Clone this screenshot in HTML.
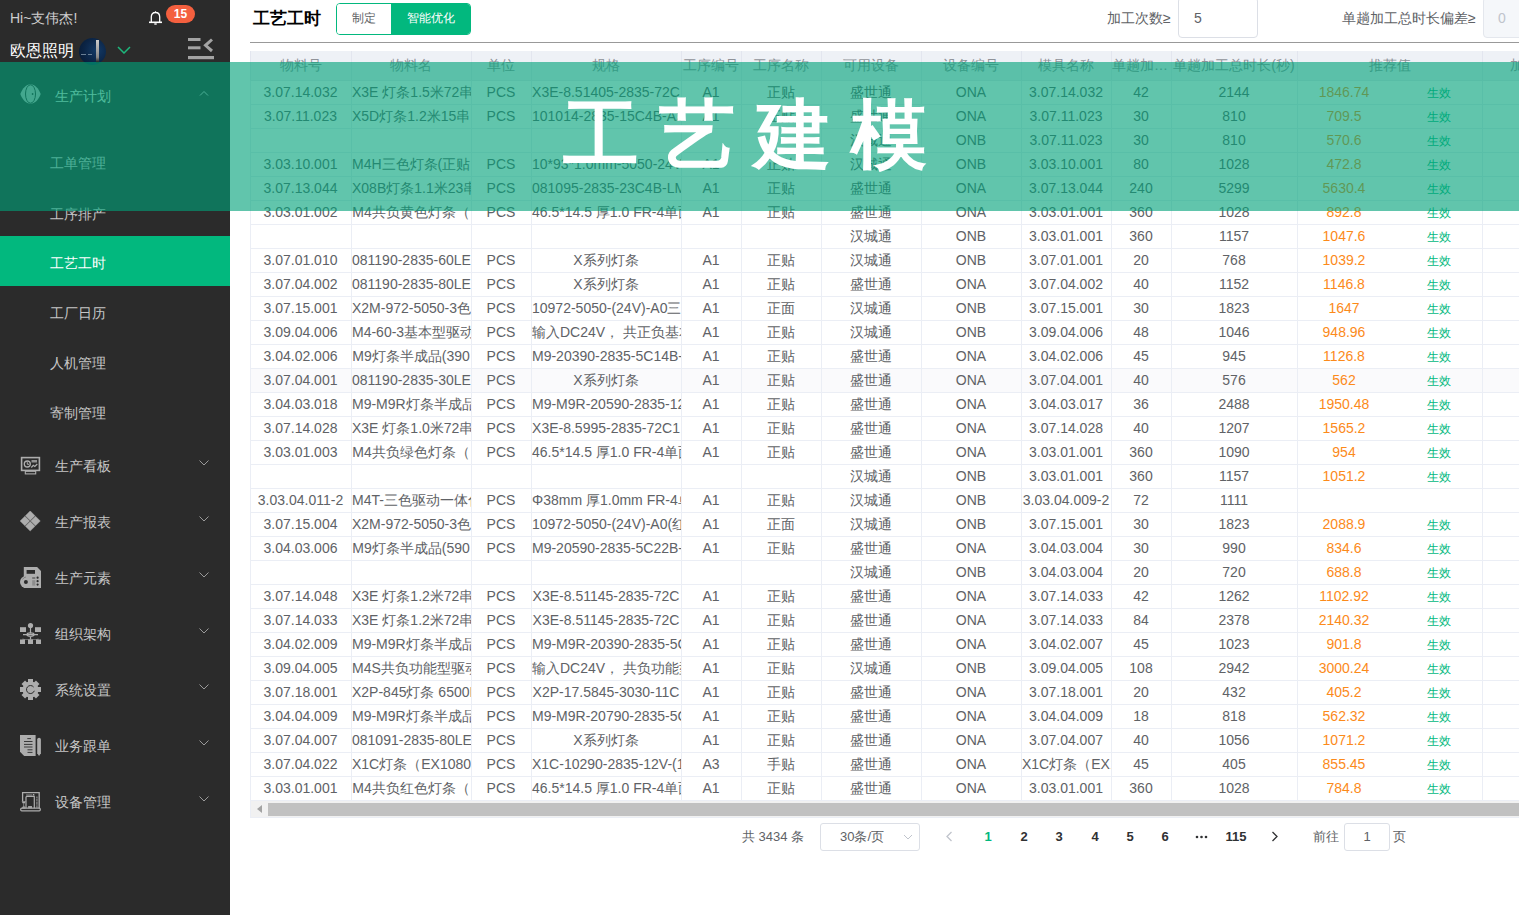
<!DOCTYPE html>
<html><head><meta charset="utf-8"><style>
*{box-sizing:content-box}
html,body{margin:0;padding:0;width:1519px;height:915px;overflow:hidden;background:#fff;font-family:"Liberation Sans",sans-serif;}
.abs{position:absolute}
.side{position:absolute;left:0;top:0;width:230px;height:915px;background:#2b2b2b;color:#c8c8c8;font-size:14px}
.hi{position:absolute;left:10px;top:8px;line-height:20px;font-size:14px;color:#cfcfcf;white-space:nowrap}
.badge{position:absolute;left:166px;top:5px;width:29px;height:18px;border-radius:9px;background:#f4603f;color:#fff;font-size:12px;line-height:18px;text-align:center;font-weight:bold}
.org{position:absolute;left:10px;top:40px;line-height:22px;font-size:16px;color:#fff;white-space:nowrap}
.avatar{position:absolute;left:79px;top:38px;width:27px;height:27px;border-radius:50%;background:radial-gradient(circle at 65% 45%,#143a66 0%,#0b2445 55%,#07182e 100%);overflow:hidden}
.menu{position:absolute;left:0;width:230px;height:56px;line-height:56px;color:#c6c6c6;font-size:14px}
.menu .t{position:absolute;left:55px;top:0}
.menu svg.ic{position:absolute;left:20px;top:18px}
.menu .chev{position:absolute;left:199px;top:22px}
.sub{position:absolute;left:0;width:230px;height:50px;line-height:50px;color:#c6c6c6;font-size:14px}
.sub .t{position:absolute;left:50px;top:2px}
.sub.act{background:#02b87e;color:#fff}
.title{position:absolute;left:253px;top:6px;font-size:17px;font-weight:bold;color:#000;line-height:26px}
.btng{position:absolute;left:336px;top:3px;width:133px;height:30px;border:1px solid #02b87e;border-radius:4px;overflow:hidden;font-size:12px}
.btng .b1{position:absolute;left:0;top:0;width:54px;height:30px;line-height:29px;text-align:center;color:#606266;background:#fff}
.btng .b2{position:absolute;left:54px;top:0;width:79px;height:30px;line-height:29px;text-align:center;color:#fff;background:#02b87e;font-weight:500}
.lbl{position:absolute;top:8px;font-size:14px;line-height:20px;color:#606266;white-space:nowrap}
.inp{position:absolute;top:-3px;height:39px;border:1px solid #dcdfe6;border-radius:4px;background:#fff;font-size:14px;line-height:39px;color:#606266}
.hline{position:absolute;left:250px;top:42px;width:1269px;height:1px;background:#999}
.table{position:absolute;left:250px;top:51px;width:1269px;height:767px;overflow:hidden}
.thead{position:absolute;left:0;top:0;width:1269px;height:29px;background:#eef1f6;border-bottom:1px solid #e6e9f0}
.th{position:absolute;top:0;height:29px;line-height:29px;border-left:1px solid #e3e6ef;padding-right:1px;text-align:center;color:#909399;font-size:14px;white-space:nowrap;overflow:hidden;text-overflow:ellipsis}
.tr{position:absolute;left:0;width:1269px;height:23px;border-bottom:1px solid #ebeef5;background:#fff}
.tr.hov{background:#fafafc}
.td{position:absolute;top:0;height:23px;line-height:23px;border-left:1px solid #ebeef5;padding-right:1px;text-align:center;color:#606266;font-size:14px;white-space:nowrap;overflow:hidden}
.rec .val{position:absolute;left:0;width:92px;text-align:center;color:#fc8a1a}
.rec .eff{position:absolute;left:117px;top:1px;width:48px;text-align:center;color:#02b87e;font-size:12px}
.scroll{position:absolute;left:0;top:750px;width:1269px;height:16px;background:#f1f1f1;border-left:1px solid #ebeef5;border-bottom:1px solid #ebeef5}
.thumb{position:absolute;left:17px;top:2px;width:1300px;height:13px;background:#c1c1c1}
.pg{position:absolute;top:827px;font-size:13px;line-height:20px;color:#606266;white-space:nowrap}
.pn{position:absolute;top:827px;font-size:13px;line-height:20px;color:#303133;font-weight:bold;text-align:center;width:30px}
.overlay{position:absolute;left:0;top:62px;width:1519px;height:149px;background:rgba(0,161,121,0.62);z-index:50}
.bigt{position:absolute;left:563px;top:90px;font-size:76px;line-height:90px;color:#fff;letter-spacing:20px;font-weight:bold;white-space:nowrap;z-index:51}
</style></head><body>
<div class="side">
  <div class="hi">Hi~支伟杰!</div>
  <svg class="abs" style="left:148px;top:10px" width="15" height="16" viewBox="0 0 15 16"><path d="M7.5 1.2 L7.5 2.2 M3.3 12 L3.3 7 Q3.3 2.5 7.5 2.5 Q11.7 2.5 11.7 7 L11.7 12" fill="none" stroke="#fff" stroke-width="1.3"/><path d="M1 12.3 H14" stroke="#fff" stroke-width="1.6"/><path d="M6.3 14 H8.7" stroke="#fff" stroke-width="1.4"/></svg>
  <div class="badge">15</div>
  <div class="org">欧恩照明</div>
  <div class="avatar"><div class="abs" style="left:17px;top:2px;width:3px;height:23px;background:linear-gradient(#ccc,#888 75%,#111)"></div><div class="abs" style="left:2px;top:16px;width:5px;height:1px;background:#6a7f95"></div><div class="abs" style="left:9px;top:16px;width:4px;height:1px;background:#6a7f95"></div></div>
  <svg class="abs" style="left:117px;top:46px" width="14" height="8" viewBox="0 0 14 8"><path d="M1 1 L7 7 L13 1" fill="none" stroke="#1db77c" stroke-width="1.5"/></svg>
  <svg class="abs" style="left:187px;top:37px" width="28" height="23" viewBox="0 0 28 23"><rect x="1" y="1" width="12.5" height="3" fill="#a3a3a3"/><rect x="1" y="9.3" width="12.5" height="3" fill="#a3a3a3"/><rect x="1" y="19" width="26" height="3.2" fill="#a3a3a3"/><path d="M25 2.5 L18.5 8.3 L25 14" fill="none" stroke="#a3a3a3" stroke-width="3"/></svg>

  <div class="menu" style="top:68px;color:#cde6d6"><svg class="ic" width="21" height="20" viewBox="0 0 21 20" style="top:16px;left:20px"><path d="M0.3 10 C2.5 4 6.5 0.2 10.5 0.2 C14.5 0.2 18.5 4 20.7 10 C18.5 16 14.5 19.8 10.5 19.8 C6.5 19.8 2.5 16 0.3 10Z" fill="#b0b0b0"/><ellipse cx="10.5" cy="10" rx="5" ry="9.2" fill="none" stroke="#2b2b2b" stroke-width="1"/><circle cx="12.6" cy="10" r="0.9" fill="#2b2b2b"/></svg><span class="t">生产计划</span><svg class="chev" style="top:22px" width="10" height="6" viewBox="0 0 10 6"><path d="M1 5.5 L5 1.5 L9 5.5" fill="none" stroke="#c6c6c6" stroke-width="1"/></svg></div>
  <div class="sub" style="top:136px"><span class="t">工单管理</span></div>
  <div class="sub" style="top:187px"><span class="t">工序排产</span></div>
  <div class="sub act" style="top:236px"><span class="t">工艺工时</span></div>
  <div class="sub" style="top:286px"><span class="t">工厂日历</span></div>
  <div class="sub" style="top:336px"><span class="t">人机管理</span></div>
  <div class="sub" style="top:386px"><span class="t">寄制管理</span></div>

  <div class="menu" style="top:438px"><svg class="ic" style="left:20px;top:17px" width="21" height="21" viewBox="0 0 21 21"><rect x="1.6" y="2.6" width="17.8" height="12.8" fill="none" stroke="#adadad" stroke-width="1.6"/><circle cx="7.3" cy="9" r="3" fill="none" stroke="#adadad" stroke-width="1.3"/><path d="M7.3 7.2V9.3H9" fill="none" stroke="#adadad" stroke-width="1"/><path d="M11.3 12.5 L13.3 10.3 L14.8 11.5 L17.3 9" fill="none" stroke="#adadad" stroke-width="1.2"/><rect x="11.5" y="5" width="5.5" height="2.5" fill="#adadad" opacity="0.8"/><rect x="5.3" y="16.3" width="10.4" height="2.6" fill="none" stroke="#adadad" stroke-width="1.1"/></svg><span class="t">生产看板</span><svg class="chev" width="10" height="6" viewBox="0 0 10 6"><path d="M0.5 0.5 L5 5 L9.5 0.5" fill="none" stroke="#9a9a9a" stroke-width="1"/></svg></div>
<div class="menu" style="top:494px"><svg class="ic" style="left:20px;top:17px" width="21" height="21" viewBox="0 0 21 21"><path d="M10.2 -0.1 L15 4.7 L10.2 9.5 L5.4 4.7Z M15.5 5.2 L20.3 10 L15.5 14.8 L10.7 10Z M10.2 10.5 L15 15.3 L10.2 20.1 L5.4 15.3Z M4.9 5.2 L9.7 10 L4.9 14.8 L0.1 10Z" fill="#adadad" stroke="#adadad" stroke-width="0.4" stroke-linejoin="round"/></svg><span class="t">生产报表</span><svg class="chev" width="10" height="6" viewBox="0 0 10 6"><path d="M0.5 0.5 L5 5 L9.5 0.5" fill="none" stroke="#9a9a9a" stroke-width="1"/></svg></div>
<div class="menu" style="top:550px"><svg class="ic" style="left:20px;top:17px" width="21" height="21" viewBox="0 0 21 21"><path d="M3.8 0 H17.1 L21 3.9 V21 H3.8Z" fill="#adadad"/><circle cx="5.9" cy="15" r="5.9" fill="#adadad"/><rect x="6.6" y="3" width="8.4" height="3.8" fill="#2b2b2b"/><circle cx="5.9" cy="15.1" r="2" fill="#2b2b2b"/><circle cx="17.6" cy="10.7" r="1.1" fill="#2b2b2b"/><circle cx="17.6" cy="14.2" r="1.1" fill="#2b2b2b"/><circle cx="17.6" cy="17.6" r="1.1" fill="#2b2b2b"/><rect x="12.2" y="10.4" width="3.1" height="1.2" fill="#555"/><rect x="12.2" y="13.2" width="3.1" height="5.4" fill="#8c8c8c"/><path d="M2.5 12.5 A4.5 4.5 0 0 1 6 10" fill="none" stroke="#777" stroke-width="0.8"/></svg><span class="t">生产元素</span><svg class="chev" width="10" height="6" viewBox="0 0 10 6"><path d="M0.5 0.5 L5 5 L9.5 0.5" fill="none" stroke="#9a9a9a" stroke-width="1"/></svg></div>
<div class="menu" style="top:606px"><svg class="ic" style="left:20px;top:17px" width="21" height="21" viewBox="0 0 21 21"><circle cx="10.5" cy="2.6" r="2.6" fill="#adadad"/><rect x="0" y="4.2" width="6" height="4.8" fill="#adadad"/><rect x="15" y="4.2" width="6" height="4.8" fill="#adadad"/><path d="M10.5 4 V10.5 M3 11.6 H18" stroke="#adadad" stroke-width="1.2"/><ellipse cx="10.5" cy="11.6" rx="3.6" ry="1.8" fill="none" stroke="#adadad" stroke-width="1.3"/><path d="M10.5 13.4 V16.5 M3 15.5 V16.5 H18 V15.5" stroke="#6a6a6a" stroke-width="1.2" fill="none"/><path d="M10.5 13.4 V16.5" stroke="#adadad" stroke-width="1.2"/><rect x="0" y="16.5" width="5" height="4.5" fill="#adadad"/><rect x="8" y="16.5" width="5" height="4.5" fill="#adadad"/><rect x="16" y="16.5" width="5" height="4.5" fill="#adadad"/></svg><span class="t">组织架构</span><svg class="chev" width="10" height="6" viewBox="0 0 10 6"><path d="M0.5 0.5 L5 5 L9.5 0.5" fill="none" stroke="#9a9a9a" stroke-width="1"/></svg></div>
<div class="menu" style="top:662px"><svg class="ic" style="left:20px;top:17px" width="21" height="21" viewBox="0 0 21 21"><g fill="#adadad"><circle cx="10.5" cy="10.5" r="8"/><rect x="8" y="0" width="5" height="21"/><rect x="0" y="8" width="21" height="5"/><rect x="8" y="0.3" width="5" height="20.4" transform="rotate(45 10.5 10.5)"/><rect x="8" y="0.3" width="5" height="20.4" transform="rotate(-45 10.5 10.5)"/></g><path d="M14.3 11.8 A4 4 0 1 1 13.6 8" fill="none" stroke="#2b2b2b" stroke-width="1"/></svg><span class="t">系统设置</span><svg class="chev" width="10" height="6" viewBox="0 0 10 6"><path d="M0.5 0.5 L5 5 L9.5 0.5" fill="none" stroke="#9a9a9a" stroke-width="1"/></svg></div>
<div class="menu" style="top:718px"><svg class="ic" style="left:20px;top:17px" width="21" height="21" viewBox="0 0 21 21"><path d="M0 0 H15.6 V21 H4.2 L0 16.7Z" fill="#adadad"/><path d="M7.3 3.6H11 M4 6.5H12.5 M4 9.4H12.5 M7.5 14.8H12.5 M7.5 17.4H12.5" stroke="#2b2b2b" stroke-width="0.9"/><path d="M4 12H12.5" stroke="#555" stroke-width="1.3"/><path d="M17.2 4.6 Q17.2 2.8 19.05 2.8 Q20.9 2.8 20.9 4.6 V18.3 L19.05 21 L17.2 18.3Z" fill="#adadad"/></svg><span class="t">业务跟单</span><svg class="chev" width="10" height="6" viewBox="0 0 10 6"><path d="M0.5 0.5 L5 5 L9.5 0.5" fill="none" stroke="#9a9a9a" stroke-width="1"/></svg></div>
<div class="menu" style="top:774px"><svg class="ic" style="left:20px;top:17px" width="21" height="21" viewBox="0 0 21 21"><path d="M2.6 10.2 V1.7 H19.2 V17.3" fill="none" stroke="#adadad" stroke-width="1.3"/><rect x="0.7" y="17.2" width="19.6" height="2.6" rx="1" fill="none" stroke="#adadad" stroke-width="1.2"/><path d="M6 4 H12.4" stroke="#adadad" stroke-width="1" opacity="0.8"/><rect x="13" y="3" width="1.3" height="1.5" fill="#adadad"/><path d="M6 17.3 V6.3 Q6 5.3 7 5.3 H14.3 V17.3" fill="none" stroke="#adadad" stroke-width="1.2"/><path d="M1.6 10.3 H5.8 L4.6 12.6 H2.8Z" fill="#adadad"/><path d="M3.7 12.6 V14.5 M2.3 17.2 L3.7 14.6 L5.2 17.2Z" stroke="#adadad" stroke-width="0.8" fill="#adadad" opacity="0.85"/><rect x="8.1" y="15" width="3.9" height="2.3" fill="#adadad" opacity="0.9"/><path d="M16.9 5.5 V16.8" stroke="#adadad" stroke-width="1.7" opacity="0.55"/><path d="M16.2 7.5 H17.6 M16.2 10.4 H17.6 M16.2 14 H17.6" stroke="#2b2b2b" stroke-width="0.7"/></svg><span class="t">设备管理</span><svg class="chev" width="10" height="6" viewBox="0 0 10 6"><path d="M0.5 0.5 L5 5 L9.5 0.5" fill="none" stroke="#9a9a9a" stroke-width="1"/></svg></div>
</div>

<div class="title">工艺工时</div>
<div class="btng"><div class="b1">制定</div><div class="b2">智能优化</div></div>
<div class="lbl" style="left:1107px">加工次数≥</div>
<div class="inp" style="left:1178px;width:78px"><span style="position:absolute;left:15px;top:1px">5</span></div>
<div class="lbl" style="left:1342px">单趟加工总时长偏差≥</div>
<div class="inp" style="left:1483px;width:60px;background:#f5f7fa;border-color:#e4e7ed;color:#c0c4cc"><span style="position:absolute;left:14px;top:1px">0</span></div>
<div class="hline"></div>

<div class="table">
<div class="thead"><div class="th" style="left:0px;width:99px">物料号</div><div class="th" style="left:101px;width:118px">物料名</div><div class="th" style="left:221px;width:58px">单位</div><div class="th" style="left:281px;width:148px">规格</div><div class="th" style="left:431px;width:58px">工序编号</div><div class="th" style="left:491px;width:78px">工序名称</div><div class="th" style="left:571px;width:98px">可用设备</div><div class="th" style="left:671px;width:98px">设备编号</div><div class="th" style="left:771px;width:88px">模具名称</div><div class="th" style="left:861px;width:58px">单趟加工次数</div><div class="th" style="left:921px;width:124px">单趟加工总时长(秒)</div><div class="th" style="left:1047px;width:183px">推荐值</div><div class="th" style="left:1232px;width:110px">加工次数</div></div><div class="tr" style="top:30px"><div class="td" style="left:0px;width:99px">3.07.14.032</div><div class="td" style="left:101px;width:118px">X3E 灯条1.5米72串</div><div class="td" style="left:221px;width:58px">PCS</div><div class="td" style="left:281px;width:148px">X3E-8.51405-2835-72C</div><div class="td" style="left:431px;width:58px">A1</div><div class="td" style="left:491px;width:78px">正贴</div><div class="td" style="left:571px;width:98px">盛世通</div><div class="td" style="left:671px;width:98px">ONA</div><div class="td" style="left:771px;width:88px">3.07.14.032</div><div class="td" style="left:861px;width:58px">42</div><div class="td" style="left:921px;width:124px">2144</div><div class="td rec" style="left:1047px;width:184px"><span class="val">1846.74</span><span class="eff">生效</span></div><div class="td" style="left:1232px;width:111px"></div></div><div class="tr" style="top:54px"><div class="td" style="left:0px;width:99px">3.07.11.023</div><div class="td" style="left:101px;width:118px">X5D灯条1.2米15串</div><div class="td" style="left:221px;width:58px">PCS</div><div class="td" style="left:281px;width:148px">101014-2835-15C4B-A2</div><div class="td" style="left:431px;width:58px">A1</div><div class="td" style="left:491px;width:78px">正贴</div><div class="td" style="left:571px;width:98px">盛世通</div><div class="td" style="left:671px;width:98px">ONA</div><div class="td" style="left:771px;width:88px">3.07.11.023</div><div class="td" style="left:861px;width:58px">30</div><div class="td" style="left:921px;width:124px">810</div><div class="td rec" style="left:1047px;width:184px"><span class="val">709.5</span><span class="eff">生效</span></div><div class="td" style="left:1232px;width:111px"></div></div><div class="tr" style="top:78px"><div class="td" style="left:0px;width:99px"></div><div class="td" style="left:101px;width:118px"></div><div class="td" style="left:221px;width:58px"></div><div class="td" style="left:281px;width:148px"></div><div class="td" style="left:431px;width:58px"></div><div class="td" style="left:491px;width:78px"></div><div class="td" style="left:571px;width:98px">汉城通</div><div class="td" style="left:671px;width:98px">ONB</div><div class="td" style="left:771px;width:88px">3.07.11.023</div><div class="td" style="left:861px;width:58px">30</div><div class="td" style="left:921px;width:124px">810</div><div class="td rec" style="left:1047px;width:184px"><span class="val">570.6</span><span class="eff">生效</span></div><div class="td" style="left:1232px;width:111px"></div></div><div class="tr" style="top:102px"><div class="td" style="left:0px;width:99px">3.03.10.001</div><div class="td" style="left:101px;width:118px">M4H三色灯条(正贴</div><div class="td" style="left:221px;width:58px">PCS</div><div class="td" style="left:281px;width:148px">10*93*1.0mm-5050-24V</div><div class="td" style="left:431px;width:58px">A1</div><div class="td" style="left:491px;width:78px">正贴</div><div class="td" style="left:571px;width:98px">汉城通</div><div class="td" style="left:671px;width:98px">ONB</div><div class="td" style="left:771px;width:88px">3.03.10.001</div><div class="td" style="left:861px;width:58px">80</div><div class="td" style="left:921px;width:124px">1028</div><div class="td rec" style="left:1047px;width:184px"><span class="val">472.8</span><span class="eff">生效</span></div><div class="td" style="left:1232px;width:111px"></div></div><div class="tr" style="top:126px"><div class="td" style="left:0px;width:99px">3.07.13.044</div><div class="td" style="left:101px;width:118px">X08B灯条1.1米23串</div><div class="td" style="left:221px;width:58px">PCS</div><div class="td" style="left:281px;width:148px">081095-2835-23C4B-LM</div><div class="td" style="left:431px;width:58px">A1</div><div class="td" style="left:491px;width:78px">正贴</div><div class="td" style="left:571px;width:98px">盛世通</div><div class="td" style="left:671px;width:98px">ONA</div><div class="td" style="left:771px;width:88px">3.07.13.044</div><div class="td" style="left:861px;width:58px">240</div><div class="td" style="left:921px;width:124px">5299</div><div class="td rec" style="left:1047px;width:184px"><span class="val">5630.4</span><span class="eff">生效</span></div><div class="td" style="left:1232px;width:111px"></div></div><div class="tr" style="top:150px"><div class="td" style="left:0px;width:99px">3.03.01.002</div><div class="td" style="left:101px;width:118px">M4共负黄色灯条（</div><div class="td" style="left:221px;width:58px">PCS</div><div class="td" style="left:281px;width:148px">46.5*14.5 厚1.0 FR-4单面</div><div class="td" style="left:431px;width:58px">A1</div><div class="td" style="left:491px;width:78px">正贴</div><div class="td" style="left:571px;width:98px">盛世通</div><div class="td" style="left:671px;width:98px">ONA</div><div class="td" style="left:771px;width:88px">3.03.01.001</div><div class="td" style="left:861px;width:58px">360</div><div class="td" style="left:921px;width:124px">1028</div><div class="td rec" style="left:1047px;width:184px"><span class="val">892.8</span><span class="eff">生效</span></div><div class="td" style="left:1232px;width:111px"></div></div><div class="tr" style="top:174px"><div class="td" style="left:0px;width:99px"></div><div class="td" style="left:101px;width:118px"></div><div class="td" style="left:221px;width:58px"></div><div class="td" style="left:281px;width:148px"></div><div class="td" style="left:431px;width:58px"></div><div class="td" style="left:491px;width:78px"></div><div class="td" style="left:571px;width:98px">汉城通</div><div class="td" style="left:671px;width:98px">ONB</div><div class="td" style="left:771px;width:88px">3.03.01.001</div><div class="td" style="left:861px;width:58px">360</div><div class="td" style="left:921px;width:124px">1157</div><div class="td rec" style="left:1047px;width:184px"><span class="val">1047.6</span><span class="eff">生效</span></div><div class="td" style="left:1232px;width:111px"></div></div><div class="tr" style="top:198px"><div class="td" style="left:0px;width:99px">3.07.01.010</div><div class="td" style="left:101px;width:118px">081190-2835-60LED</div><div class="td" style="left:221px;width:58px">PCS</div><div class="td" style="left:281px;width:148px">X系列灯条</div><div class="td" style="left:431px;width:58px">A1</div><div class="td" style="left:491px;width:78px">正贴</div><div class="td" style="left:571px;width:98px">汉城通</div><div class="td" style="left:671px;width:98px">ONB</div><div class="td" style="left:771px;width:88px">3.07.01.001</div><div class="td" style="left:861px;width:58px">20</div><div class="td" style="left:921px;width:124px">768</div><div class="td rec" style="left:1047px;width:184px"><span class="val">1039.2</span><span class="eff">生效</span></div><div class="td" style="left:1232px;width:111px"></div></div><div class="tr" style="top:222px"><div class="td" style="left:0px;width:99px">3.07.04.002</div><div class="td" style="left:101px;width:118px">081190-2835-80LED</div><div class="td" style="left:221px;width:58px">PCS</div><div class="td" style="left:281px;width:148px">X系列灯条</div><div class="td" style="left:431px;width:58px">A1</div><div class="td" style="left:491px;width:78px">正贴</div><div class="td" style="left:571px;width:98px">盛世通</div><div class="td" style="left:671px;width:98px">ONA</div><div class="td" style="left:771px;width:88px">3.07.04.002</div><div class="td" style="left:861px;width:58px">40</div><div class="td" style="left:921px;width:124px">1152</div><div class="td rec" style="left:1047px;width:184px"><span class="val">1146.8</span><span class="eff">生效</span></div><div class="td" style="left:1232px;width:111px"></div></div><div class="tr" style="top:246px"><div class="td" style="left:0px;width:99px">3.07.15.001</div><div class="td" style="left:101px;width:118px">X2M-972-5050-3色</div><div class="td" style="left:221px;width:58px">PCS</div><div class="td" style="left:281px;width:148px">10972-5050-(24V)-A0三色</div><div class="td" style="left:431px;width:58px">A1</div><div class="td" style="left:491px;width:78px">正面</div><div class="td" style="left:571px;width:98px">汉城通</div><div class="td" style="left:671px;width:98px">ONB</div><div class="td" style="left:771px;width:88px">3.07.15.001</div><div class="td" style="left:861px;width:58px">30</div><div class="td" style="left:921px;width:124px">1823</div><div class="td rec" style="left:1047px;width:184px"><span class="val">1647</span><span class="eff">生效</span></div><div class="td" style="left:1232px;width:111px"></div></div><div class="tr" style="top:270px"><div class="td" style="left:0px;width:99px">3.09.04.006</div><div class="td" style="left:101px;width:118px">M4-60-3基本型驱动</div><div class="td" style="left:221px;width:58px">PCS</div><div class="td" style="left:281px;width:148px">输入DC24V， 共正负基本</div><div class="td" style="left:431px;width:58px">A1</div><div class="td" style="left:491px;width:78px">正贴</div><div class="td" style="left:571px;width:98px">汉城通</div><div class="td" style="left:671px;width:98px">ONB</div><div class="td" style="left:771px;width:88px">3.09.04.006</div><div class="td" style="left:861px;width:58px">48</div><div class="td" style="left:921px;width:124px">1046</div><div class="td rec" style="left:1047px;width:184px"><span class="val">948.96</span><span class="eff">生效</span></div><div class="td" style="left:1232px;width:111px"></div></div><div class="tr" style="top:294px"><div class="td" style="left:0px;width:99px">3.04.02.006</div><div class="td" style="left:101px;width:118px">M9灯条半成品(390</div><div class="td" style="left:221px;width:58px">PCS</div><div class="td" style="left:281px;width:148px">M9-20390-2835-5C14B-</div><div class="td" style="left:431px;width:58px">A1</div><div class="td" style="left:491px;width:78px">正贴</div><div class="td" style="left:571px;width:98px">盛世通</div><div class="td" style="left:671px;width:98px">ONA</div><div class="td" style="left:771px;width:88px">3.04.02.006</div><div class="td" style="left:861px;width:58px">45</div><div class="td" style="left:921px;width:124px">945</div><div class="td rec" style="left:1047px;width:184px"><span class="val">1126.8</span><span class="eff">生效</span></div><div class="td" style="left:1232px;width:111px"></div></div><div class="tr hov" style="top:318px"><div class="td" style="left:0px;width:99px">3.07.04.001</div><div class="td" style="left:101px;width:118px">081190-2835-30LED</div><div class="td" style="left:221px;width:58px">PCS</div><div class="td" style="left:281px;width:148px">X系列灯条</div><div class="td" style="left:431px;width:58px">A1</div><div class="td" style="left:491px;width:78px">正贴</div><div class="td" style="left:571px;width:98px">盛世通</div><div class="td" style="left:671px;width:98px">ONA</div><div class="td" style="left:771px;width:88px">3.07.04.001</div><div class="td" style="left:861px;width:58px">40</div><div class="td" style="left:921px;width:124px">576</div><div class="td rec" style="left:1047px;width:184px"><span class="val">562</span><span class="eff">生效</span></div><div class="td" style="left:1232px;width:111px"></div></div><div class="tr" style="top:342px"><div class="td" style="left:0px;width:99px">3.04.03.018</div><div class="td" style="left:101px;width:118px">M9-M9R灯条半成品</div><div class="td" style="left:221px;width:58px">PCS</div><div class="td" style="left:281px;width:148px">M9-M9R-20590-2835-12</div><div class="td" style="left:431px;width:58px">A1</div><div class="td" style="left:491px;width:78px">正贴</div><div class="td" style="left:571px;width:98px">盛世通</div><div class="td" style="left:671px;width:98px">ONA</div><div class="td" style="left:771px;width:88px">3.04.03.017</div><div class="td" style="left:861px;width:58px">36</div><div class="td" style="left:921px;width:124px">2488</div><div class="td rec" style="left:1047px;width:184px"><span class="val">1950.48</span><span class="eff">生效</span></div><div class="td" style="left:1232px;width:111px"></div></div><div class="tr" style="top:366px"><div class="td" style="left:0px;width:99px">3.07.14.028</div><div class="td" style="left:101px;width:118px">X3E 灯条1.0米72串</div><div class="td" style="left:221px;width:58px">PCS</div><div class="td" style="left:281px;width:148px">X3E-8.5995-2835-72C1</div><div class="td" style="left:431px;width:58px">A1</div><div class="td" style="left:491px;width:78px">正贴</div><div class="td" style="left:571px;width:98px">盛世通</div><div class="td" style="left:671px;width:98px">ONA</div><div class="td" style="left:771px;width:88px">3.07.14.028</div><div class="td" style="left:861px;width:58px">40</div><div class="td" style="left:921px;width:124px">1207</div><div class="td rec" style="left:1047px;width:184px"><span class="val">1565.2</span><span class="eff">生效</span></div><div class="td" style="left:1232px;width:111px"></div></div><div class="tr" style="top:390px"><div class="td" style="left:0px;width:99px">3.03.01.003</div><div class="td" style="left:101px;width:118px">M4共负绿色灯条（</div><div class="td" style="left:221px;width:58px">PCS</div><div class="td" style="left:281px;width:148px">46.5*14.5 厚1.0 FR-4单面</div><div class="td" style="left:431px;width:58px">A1</div><div class="td" style="left:491px;width:78px">正贴</div><div class="td" style="left:571px;width:98px">盛世通</div><div class="td" style="left:671px;width:98px">ONA</div><div class="td" style="left:771px;width:88px">3.03.01.001</div><div class="td" style="left:861px;width:58px">360</div><div class="td" style="left:921px;width:124px">1090</div><div class="td rec" style="left:1047px;width:184px"><span class="val">954</span><span class="eff">生效</span></div><div class="td" style="left:1232px;width:111px"></div></div><div class="tr" style="top:414px"><div class="td" style="left:0px;width:99px"></div><div class="td" style="left:101px;width:118px"></div><div class="td" style="left:221px;width:58px"></div><div class="td" style="left:281px;width:148px"></div><div class="td" style="left:431px;width:58px"></div><div class="td" style="left:491px;width:78px"></div><div class="td" style="left:571px;width:98px">汉城通</div><div class="td" style="left:671px;width:98px">ONB</div><div class="td" style="left:771px;width:88px">3.03.01.001</div><div class="td" style="left:861px;width:58px">360</div><div class="td" style="left:921px;width:124px">1157</div><div class="td rec" style="left:1047px;width:184px"><span class="val">1051.2</span><span class="eff">生效</span></div><div class="td" style="left:1232px;width:111px"></div></div><div class="tr" style="top:438px"><div class="td" style="left:0px;width:99px">3.03.04.011-2</div><div class="td" style="left:101px;width:118px">M4T-三色驱动一体化</div><div class="td" style="left:221px;width:58px">PCS</div><div class="td" style="left:281px;width:148px">Φ38mm 厚1.0mm FR-4单面</div><div class="td" style="left:431px;width:58px">A1</div><div class="td" style="left:491px;width:78px">正贴</div><div class="td" style="left:571px;width:98px">汉城通</div><div class="td" style="left:671px;width:98px">ONB</div><div class="td" style="left:771px;width:88px">3.03.04.009-2</div><div class="td" style="left:861px;width:58px">72</div><div class="td" style="left:921px;width:124px">1111</div><div class="td rec" style="left:1047px;width:184px"></div><div class="td" style="left:1232px;width:111px"></div></div><div class="tr" style="top:462px"><div class="td" style="left:0px;width:99px">3.07.15.004</div><div class="td" style="left:101px;width:118px">X2M-972-5050-3色</div><div class="td" style="left:221px;width:58px">PCS</div><div class="td" style="left:281px;width:148px">10972-5050-(24V)-A0(红</div><div class="td" style="left:431px;width:58px">A1</div><div class="td" style="left:491px;width:78px">正面</div><div class="td" style="left:571px;width:98px">汉城通</div><div class="td" style="left:671px;width:98px">ONB</div><div class="td" style="left:771px;width:88px">3.07.15.001</div><div class="td" style="left:861px;width:58px">30</div><div class="td" style="left:921px;width:124px">1823</div><div class="td rec" style="left:1047px;width:184px"><span class="val">2088.9</span><span class="eff">生效</span></div><div class="td" style="left:1232px;width:111px"></div></div><div class="tr" style="top:486px"><div class="td" style="left:0px;width:99px">3.04.03.006</div><div class="td" style="left:101px;width:118px">M9灯条半成品(590</div><div class="td" style="left:221px;width:58px">PCS</div><div class="td" style="left:281px;width:148px">M9-20590-2835-5C22B-</div><div class="td" style="left:431px;width:58px">A1</div><div class="td" style="left:491px;width:78px">正贴</div><div class="td" style="left:571px;width:98px">盛世通</div><div class="td" style="left:671px;width:98px">ONA</div><div class="td" style="left:771px;width:88px">3.04.03.004</div><div class="td" style="left:861px;width:58px">30</div><div class="td" style="left:921px;width:124px">990</div><div class="td rec" style="left:1047px;width:184px"><span class="val">834.6</span><span class="eff">生效</span></div><div class="td" style="left:1232px;width:111px"></div></div><div class="tr" style="top:510px"><div class="td" style="left:0px;width:99px"></div><div class="td" style="left:101px;width:118px"></div><div class="td" style="left:221px;width:58px"></div><div class="td" style="left:281px;width:148px"></div><div class="td" style="left:431px;width:58px"></div><div class="td" style="left:491px;width:78px"></div><div class="td" style="left:571px;width:98px">汉城通</div><div class="td" style="left:671px;width:98px">ONB</div><div class="td" style="left:771px;width:88px">3.04.03.004</div><div class="td" style="left:861px;width:58px">20</div><div class="td" style="left:921px;width:124px">720</div><div class="td rec" style="left:1047px;width:184px"><span class="val">688.8</span><span class="eff">生效</span></div><div class="td" style="left:1232px;width:111px"></div></div><div class="tr" style="top:534px"><div class="td" style="left:0px;width:99px">3.07.14.048</div><div class="td" style="left:101px;width:118px">X3E 灯条1.2米72串</div><div class="td" style="left:221px;width:58px">PCS</div><div class="td" style="left:281px;width:148px">X3E-8.51145-2835-72C</div><div class="td" style="left:431px;width:58px">A1</div><div class="td" style="left:491px;width:78px">正贴</div><div class="td" style="left:571px;width:98px">盛世通</div><div class="td" style="left:671px;width:98px">ONA</div><div class="td" style="left:771px;width:88px">3.07.14.033</div><div class="td" style="left:861px;width:58px">42</div><div class="td" style="left:921px;width:124px">1262</div><div class="td rec" style="left:1047px;width:184px"><span class="val">1102.92</span><span class="eff">生效</span></div><div class="td" style="left:1232px;width:111px"></div></div><div class="tr" style="top:558px"><div class="td" style="left:0px;width:99px">3.07.14.033</div><div class="td" style="left:101px;width:118px">X3E 灯条1.2米72串</div><div class="td" style="left:221px;width:58px">PCS</div><div class="td" style="left:281px;width:148px">X3E-8.51145-2835-72C</div><div class="td" style="left:431px;width:58px">A1</div><div class="td" style="left:491px;width:78px">正贴</div><div class="td" style="left:571px;width:98px">盛世通</div><div class="td" style="left:671px;width:98px">ONA</div><div class="td" style="left:771px;width:88px">3.07.14.033</div><div class="td" style="left:861px;width:58px">84</div><div class="td" style="left:921px;width:124px">2378</div><div class="td rec" style="left:1047px;width:184px"><span class="val">2140.32</span><span class="eff">生效</span></div><div class="td" style="left:1232px;width:111px"></div></div><div class="tr" style="top:582px"><div class="td" style="left:0px;width:99px">3.04.02.009</div><div class="td" style="left:101px;width:118px">M9-M9R灯条半成品</div><div class="td" style="left:221px;width:58px">PCS</div><div class="td" style="left:281px;width:148px">M9-M9R-20390-2835-5C</div><div class="td" style="left:431px;width:58px">A1</div><div class="td" style="left:491px;width:78px">正贴</div><div class="td" style="left:571px;width:98px">盛世通</div><div class="td" style="left:671px;width:98px">ONA</div><div class="td" style="left:771px;width:88px">3.04.02.007</div><div class="td" style="left:861px;width:58px">45</div><div class="td" style="left:921px;width:124px">1023</div><div class="td rec" style="left:1047px;width:184px"><span class="val">901.8</span><span class="eff">生效</span></div><div class="td" style="left:1232px;width:111px"></div></div><div class="tr" style="top:606px"><div class="td" style="left:0px;width:99px">3.09.04.005</div><div class="td" style="left:101px;width:118px">M4S共负功能型驱动</div><div class="td" style="left:221px;width:58px">PCS</div><div class="td" style="left:281px;width:148px">输入DC24V， 共负功能型</div><div class="td" style="left:431px;width:58px">A1</div><div class="td" style="left:491px;width:78px">正贴</div><div class="td" style="left:571px;width:98px">汉城通</div><div class="td" style="left:671px;width:98px">ONB</div><div class="td" style="left:771px;width:88px">3.09.04.005</div><div class="td" style="left:861px;width:58px">108</div><div class="td" style="left:921px;width:124px">2942</div><div class="td rec" style="left:1047px;width:184px"><span class="val">3000.24</span><span class="eff">生效</span></div><div class="td" style="left:1232px;width:111px"></div></div><div class="tr" style="top:630px"><div class="td" style="left:0px;width:99px">3.07.18.001</div><div class="td" style="left:101px;width:118px">X2P-845灯条 6500K</div><div class="td" style="left:221px;width:58px">PCS</div><div class="td" style="left:281px;width:148px">X2P-17.5845-3030-11C</div><div class="td" style="left:431px;width:58px">A1</div><div class="td" style="left:491px;width:78px">正贴</div><div class="td" style="left:571px;width:98px">盛世通</div><div class="td" style="left:671px;width:98px">ONA</div><div class="td" style="left:771px;width:88px">3.07.18.001</div><div class="td" style="left:861px;width:58px">20</div><div class="td" style="left:921px;width:124px">432</div><div class="td rec" style="left:1047px;width:184px"><span class="val">405.2</span><span class="eff">生效</span></div><div class="td" style="left:1232px;width:111px"></div></div><div class="tr" style="top:654px"><div class="td" style="left:0px;width:99px">3.04.04.009</div><div class="td" style="left:101px;width:118px">M9-M9R灯条半成品</div><div class="td" style="left:221px;width:58px">PCS</div><div class="td" style="left:281px;width:148px">M9-M9R-20790-2835-5C</div><div class="td" style="left:431px;width:58px">A1</div><div class="td" style="left:491px;width:78px">正贴</div><div class="td" style="left:571px;width:98px">盛世通</div><div class="td" style="left:671px;width:98px">ONA</div><div class="td" style="left:771px;width:88px">3.04.04.009</div><div class="td" style="left:861px;width:58px">18</div><div class="td" style="left:921px;width:124px">818</div><div class="td rec" style="left:1047px;width:184px"><span class="val">562.32</span><span class="eff">生效</span></div><div class="td" style="left:1232px;width:111px"></div></div><div class="tr" style="top:678px"><div class="td" style="left:0px;width:99px">3.07.04.007</div><div class="td" style="left:101px;width:118px">081091-2835-80LED</div><div class="td" style="left:221px;width:58px">PCS</div><div class="td" style="left:281px;width:148px">X系列灯条</div><div class="td" style="left:431px;width:58px">A1</div><div class="td" style="left:491px;width:78px">正贴</div><div class="td" style="left:571px;width:98px">盛世通</div><div class="td" style="left:671px;width:98px">ONA</div><div class="td" style="left:771px;width:88px">3.07.04.007</div><div class="td" style="left:861px;width:58px">40</div><div class="td" style="left:921px;width:124px">1056</div><div class="td rec" style="left:1047px;width:184px"><span class="val">1071.2</span><span class="eff">生效</span></div><div class="td" style="left:1232px;width:111px"></div></div><div class="tr" style="top:702px"><div class="td" style="left:0px;width:99px">3.07.04.022</div><div class="td" style="left:101px;width:118px">X1C灯条（EX1080</div><div class="td" style="left:221px;width:58px">PCS</div><div class="td" style="left:281px;width:148px">X1C-10290-2835-12V-(1</div><div class="td" style="left:431px;width:58px">A3</div><div class="td" style="left:491px;width:78px">手贴</div><div class="td" style="left:571px;width:98px">盛世通</div><div class="td" style="left:671px;width:98px">ONA</div><div class="td" style="left:771px;width:88px">X1C灯条（EX10</div><div class="td" style="left:861px;width:58px">45</div><div class="td" style="left:921px;width:124px">405</div><div class="td rec" style="left:1047px;width:184px"><span class="val">855.45</span><span class="eff">生效</span></div><div class="td" style="left:1232px;width:111px"></div></div><div class="tr" style="top:726px"><div class="td" style="left:0px;width:99px">3.03.01.001</div><div class="td" style="left:101px;width:118px">M4共负红色灯条（</div><div class="td" style="left:221px;width:58px">PCS</div><div class="td" style="left:281px;width:148px">46.5*14.5 厚1.0 FR-4单面</div><div class="td" style="left:431px;width:58px">A1</div><div class="td" style="left:491px;width:78px">正贴</div><div class="td" style="left:571px;width:98px">盛世通</div><div class="td" style="left:671px;width:98px">ONA</div><div class="td" style="left:771px;width:88px">3.03.01.001</div><div class="td" style="left:861px;width:58px">360</div><div class="td" style="left:921px;width:124px">1028</div><div class="td rec" style="left:1047px;width:184px"><span class="val">784.8</span><span class="eff">生效</span></div><div class="td" style="left:1232px;width:111px"></div></div>
<div class="scroll"><svg class="abs" style="left:6px;top:4px" width="5" height="8" viewBox="0 0 5 8"><path d="M5 0 L0 4 L5 8Z" fill="#a3a3a3"/></svg><div class="thumb"></div></div>
</div>

<div class="pg" style="left:742px">共 3434 条</div>
<div class="abs" style="left:820px;top:823px;width:98px;height:26px;border:1px solid #dcdfe6;border-radius:3px;font-size:13px;line-height:26px;color:#606266"><span class="abs" style="left:19px">30条/页</span><svg class="abs" style="left:82px;top:10px" width="10" height="6" viewBox="0 0 10 6"><path d="M1 1 L5 5 L9 1" fill="none" stroke="#c0c4cc" stroke-width="1"/></svg></div>
<svg class="abs" style="left:945px;top:831px" width="8" height="11" viewBox="0 0 8 11"><path d="M6.5 1 L2 5.5 L6.5 10" fill="none" stroke="#c0c4cc" stroke-width="1.3"/></svg>
<div class="pn" style="left:973px;color:#02b87e">1</div>
<div class="pn" style="left:1009px">2</div>
<div class="pn" style="left:1044px">3</div>
<div class="pn" style="left:1080px">4</div>
<div class="pn" style="left:1115px">5</div>
<div class="pn" style="left:1150px">6</div>
<svg class="abs" style="left:1193px;top:834px" width="16" height="6" viewBox="0 0 16 6"><circle cx="4" cy="3" r="1.3" fill="#303133"/><circle cx="8.5" cy="3" r="1.3" fill="#303133"/><circle cx="13" cy="3" r="1.3" fill="#303133"/></svg>
<div class="pn" style="left:1221px">115</div>
<svg class="abs" style="left:1271px;top:831px" width="8" height="11" viewBox="0 0 8 11"><path d="M1.5 1 L6 5.5 L1.5 10" fill="none" stroke="#303133" stroke-width="1.3"/></svg>
<div class="pg" style="left:1313px">前往</div>
<div class="abs" style="left:1344px;top:823px;width:44px;height:26px;border:1px solid #dcdfe6;border-radius:3px;font-size:13px;line-height:26px;color:#606266;text-align:center">1</div>
<div class="pg" style="left:1393px">页</div>

<div class="overlay"></div>
<div class="bigt">工艺建模</div>
</body></html>
